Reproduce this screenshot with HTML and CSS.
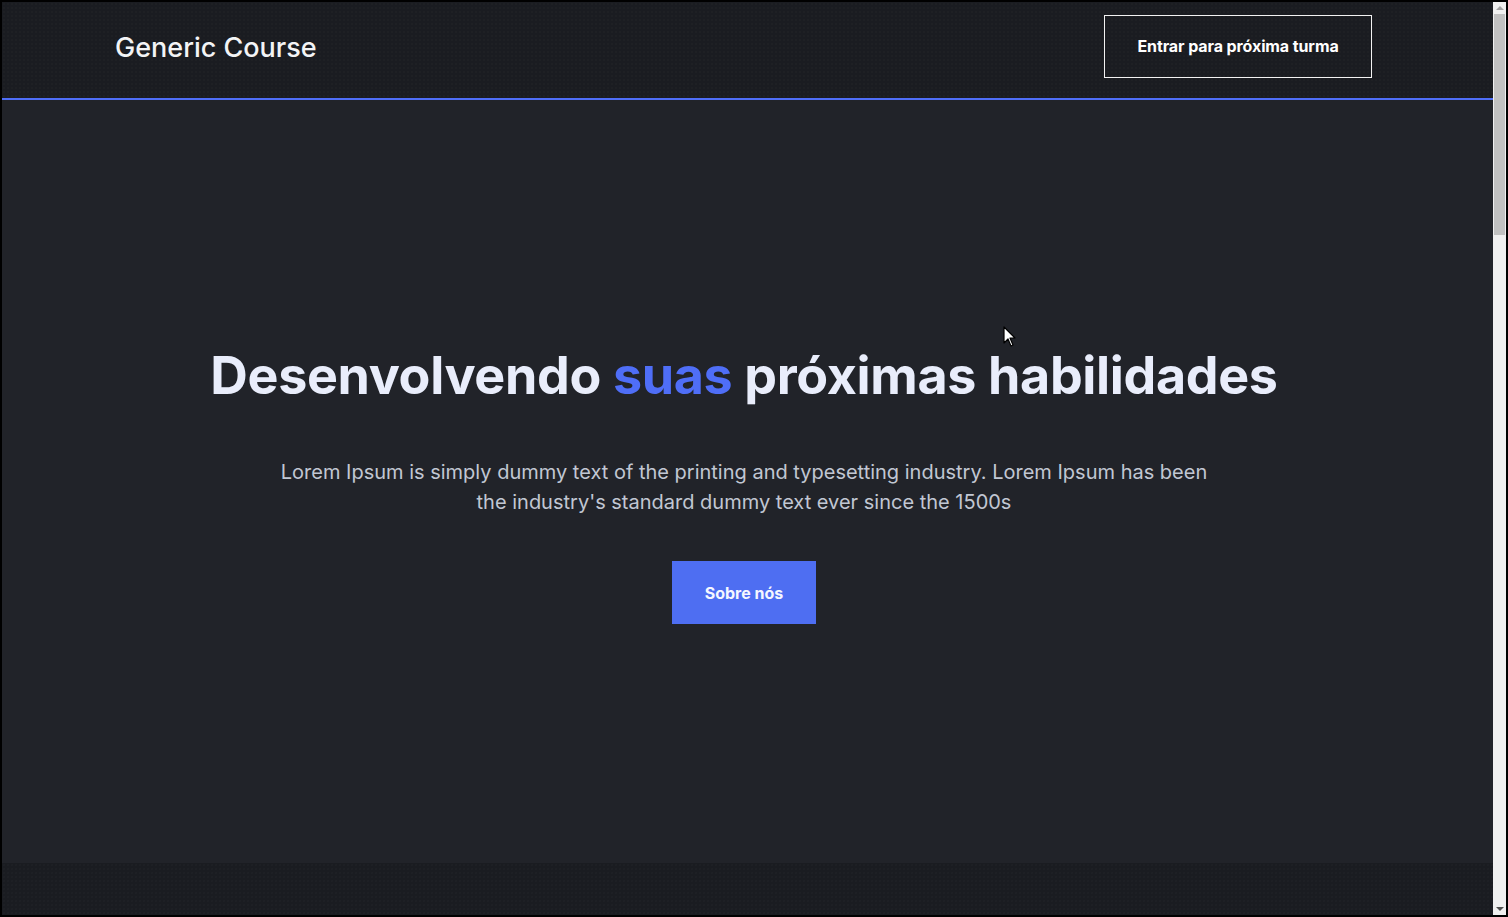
FILE: index.html
```html
<!DOCTYPE html>
<html lang="pt-BR">
<head>
<meta charset="utf-8">
<title>Generic Course</title>
<link rel="stylesheet" href="styles.css">
</head>
<body>
<div class="frame">
  <div class="page">
    <header class="header">
      <div class="header-inner">
        <a class="logo" href="#">Generic Course</a>
        <a class="btn-outline" href="#">Entrar para próxima turma</a>
      </div>
    </header>
    <section class="hero">
      <div class="hero-inner">
        <h1 class="hero-title">Desenvolvendo <span class="accent">suas</span> próximas habilidades</h1>
        <p class="hero-text">Lorem Ipsum is simply dummy text of the printing and typesetting industry. Lorem Ipsum has been the industry's standard dummy text ever since the 1500s</p>
        <a class="btn-primary" href="#">Sobre nós</a>
      </div>
    </section>
    <section class="next"></section>
  </div>
  <div class="scrollbar">
    <div class="sb-arrow sb-up"></div>
    <div class="sb-thumb"></div>
    <div class="sb-arrow sb-down"></div>
  </div>
</div>
<svg class="cursor" width="14" height="22" viewBox="0 0 14 22"><path d="M1 1 L1 17 L5 13 L8 20 L10 19 L7 12 L12 12 Z" fill="#fff" stroke="#000" stroke-width="1.2" stroke-linejoin="round"/></svg>
</body>
</html>
```
FILE: styles.css
```css
* { box-sizing: border-box; }
html, body { margin: 0; padding: 0; height: 100%; overflow: hidden; }
body {
  background: #000;
  font-family: Inter, "Noto Sans", sans-serif;
}
a { text-decoration: none; }

.frame {
  display: flex;
  height: 917px;
  padding: 2px 2px 2px 2px;
}
.page {
  flex: 1;
  display: flex;
  flex-direction: column;
  overflow: hidden;
}

.header {
  height: 98px;
  flex: none;
  background-color: #1a1c21;
  background-image: radial-gradient(rgba(255,255,255,0.035) 0.6px, transparent 0.8px);
  background-size: 4px 4px;
  border-bottom: 2px solid #4f6ef7;
}
.header-inner {
  height: 96px;
  display: flex;
  align-items: center;
  justify-content: space-between;
  padding: 0 121px 8px 113px;
}
.logo {
  color: #f3f4f6;
  font-size: 27px;
  font-weight: 500;
  margin-top: 2px;
}
.btn-outline {
  display: flex;
  align-items: center;
  justify-content: center;
  width: 268px;
  height: 63px;
  border: 1px solid #f2f2f2;
  color: #fff;
  font-size: 16px;
  font-weight: 700;
  letter-spacing: -0.1px;
}

.hero {
  height: 763px;
  flex: none;
  background: #212329;
  display: flex;
  align-items: center;
  justify-content: center;
  padding-right: 7px;
  padding-top: 6px;
}
.hero-inner {
  display: flex;
  flex-direction: column;
  align-items: center;
  text-align: center;
}
.hero-title {
  margin: 0;
  color: #e9edfb;
  font-size: 52px;
  font-weight: 700;
  line-height: 62px;
  letter-spacing: -0.35px;
}
.accent { color: #4f6ef7; }
.hero-text {
  margin: 50px 0 0;
  max-width: 940px;
  color: #c1c7d3;
  font-size: 20px;
  line-height: 30px;
}
.btn-primary {
  margin-top: 44px;
  display: flex;
  align-items: center;
  justify-content: center;
  width: 144px;
  height: 63px;
  background: #4e6ef2;
  color: #f5f7ff;
  font-size: 16px;
  font-weight: 700;
}

.next {
  flex: 1;
  background-color: #1a1c21;
  background-image: radial-gradient(rgba(255,255,255,0.04) 0.6px, transparent 0.8px);
  background-size: 4px 4px;
}

.scrollbar {
  width: 13px;
  flex: none;
  background: #f0f0f0;
  display: flex;
  flex-direction: column;
  align-items: center;
}
.sb-arrow {
  width: 0; height: 0;
  border-left: 4px solid transparent;
  border-right: 4px solid transparent;
  margin: 4px 0;
}
.sb-up { border-bottom: 4px solid #a3a3a3; }
.sb-down { border-top: 4px solid #505050; margin-top: auto; }
.sb-thumb {
  width: 11px;
  height: 221px;
  background: #c1c1c1;
  margin-top: 0;
}

.cursor {
  position: absolute;
  left: 1003px;
  top: 326px;
}
```
